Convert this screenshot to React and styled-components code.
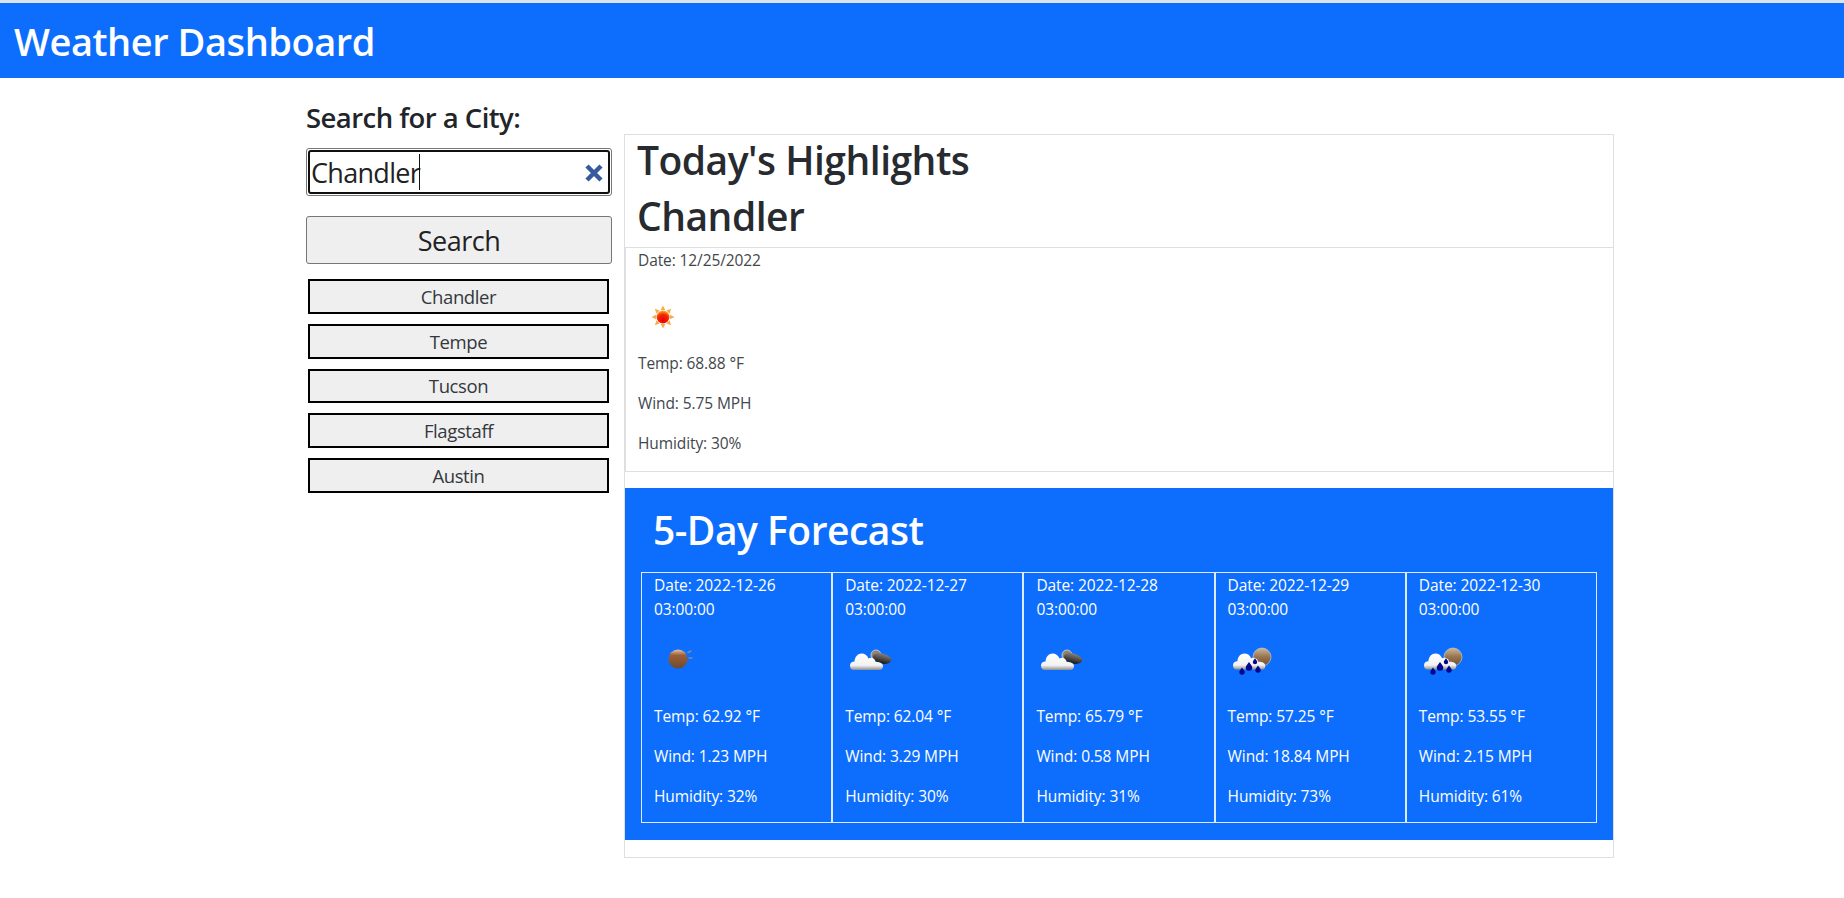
import React from "react";
import styled, { createGlobalStyle } from "styled-components";

const Global = createGlobalStyle`
  html, body { margin: 0; padding: 0; background: #fff; }
  body { font-family: "Open Sans", "Noto Sans", sans-serif; color: #212529; font-size: 16px; line-height: 24px; }
  * { box-sizing: border-box; }
`;

const Page = styled.div`
  width: 1844px;
  height: 898px;
  overflow: hidden;
`;
const Header = styled.header`
  height: 78px;
  background: #0d6efd;
  border-top: 3px solid #dde3ea;
  padding: 1px 14px 0;
  display: flex;
  align-items: center;
`;
const Title = styled.h1`
  margin: 0;
  font-size: 38px;
  line-height: 46px;
  font-weight: 600;
  letter-spacing: -0.45px;
  color: #fff;
`;
const Main = styled.main`
  display: flex;
  gap: 12px;
  padding: 24px 230px 0 306px;
`;
const Sidebar = styled.aside`
  width: 306px;
  flex: none;
`;
const SearchLabel = styled.h4`
  margin: 0 0 14px;
  height: 32px;
  font-size: 27.5px;
  line-height: 32px;
  font-weight: 600;
  letter-spacing: -0.55px;
  white-space: nowrap;
`;
const Field = styled.div`
  height: 48px;
  border: 1px solid #767676;
  border-radius: 3px;
  padding: 1px;
  background: #fff;
  margin-bottom: 20px;
`;
const FieldInner = styled.div`
  height: 100%;
  border: 2px solid #101010;
  border-radius: 3px;
  display: flex;
  align-items: center;
  padding: 2px 2px 0 1px;
  font-size: 27px;
  font-weight: 400;
  color: #222;
  letter-spacing: -0.7px;
`;
const Caret = styled.span`
  display: inline-block;
  width: 1px;
  height: 36px;
  background: #111;
  margin: -2px 0 0 -1px;
`;
const ClearIcon = styled.svg`
  width: 24px;
  height: 24px;
  margin: -1px 0 0 auto;
  flex: none;
`;
const SearchButton = styled.button`
  display: block;
  width: 306px;
  height: 48px;
  background: #efefef;
  border: 1px solid #767676;
  border-radius: 3px;
  font: inherit;
  font-size: 27px;
  font-weight: 400;
  letter-spacing: -0.5px;
  color: #222;
  padding: 2px 0 0;
  margin-bottom: 15px;
`;
const History = styled.div`
  display: flex;
  flex-direction: column;
  gap: 10px;
  padding: 0 3px 0 2px;
`;
const HistoryButton = styled.button`
  height: 34.75px;
  background: #efefef;
  border: 2.5px solid #000;
  font: inherit;
  font-size: 18.5px;
  font-weight: 400;
  letter-spacing: -0.4px;
  color: #33383d;
  padding: 1px 0 0;
`;
const Content = styled.section`
  width: 990px;
  height: 724px;
  margin-top: 32px;
  border: 1px solid #dfdfdf;
`;
const CardHeader = styled.div`
  height: 112px;
  padding: 1px 12px 0;
`;
const Heading = styled.h2`
  margin: 0 0 8px;
  font-size: 39px;
  line-height: 48px;
  font-weight: 600;
  letter-spacing: -0.5px;
  color: ${(p) => p.$light ? "#fff" : "#272b30"};
  white-space: nowrap;
`;
const Today = styled.div`
  height: 225px;
  border: 1px solid #dfdfdf;
  border-right: 0;
  padding: 0 12px;
`;
const Line = styled.p`
  margin: 0 0 16px;
  font-size: 15.5px;
  line-height: 24px;
  font-weight: 400;
  letter-spacing: -0.1px;
  color: ${(p) => p.$light ? "#fff" : "#42474c"};
`;
const IconBox = styled.div`
  width: 50px;
  height: 50px;
  margin: 0 0 ${(p) => p.$gap}px;
`;
const Forecast = styled.div`
  margin-top: 16px;
  height: 352px;
  background: #0d6efd;
  padding: 18px 16px 0 16px;
`;
const ForecastHeading = styled(Heading)`
  margin: 0 0 18px;
  padding-left: 12px;
  height: 48px;
`;
const CardRow = styled.div`
  display: flex;
`;
const DayCard = styled.div`
  flex: 1;
  height: 251px;
  border: 1px solid #dcebff;
  padding: 0 12px;
`;

const ic = {
  sun: (
    <svg viewBox="0 0 50 50" width="50" height="50">
      <defs>
        <radialGradient id="sunCore" cx="50%" cy="75%" r="70%">
          <stop offset="0%" stopColor="#e80000" />
          <stop offset="65%" stopColor="#f52a05" />
          <stop offset="100%" stopColor="#ffa010" />
        </radialGradient>
      </defs>
      <g fill="#f7ac4a">
        {[0, 45, 90, 135, 180, 225, 270, 315].map((a) => (
          <polygon key={a} points="25,17.500 22.700,22 27.300,22" transform={`rotate(${a} 25 29)`} />
        ))}
      </g>
      <circle cx="25" cy="29" r="6.500" fill="url(#sunCore)" />
    </svg>
  ),
  moon: (
    <svg viewBox="0 0 50 50" width="50" height="50">
      <defs>
        <linearGradient id="moonFill" x1="0" y1="0" x2="0" y2="1">
          <stop offset="0%" stopColor="#e3c6a6" />
          <stop offset="30%" stopColor="#9c5f38" />
          <stop offset="100%" stopColor="#6b4a30" />
        </linearGradient>
      </defs>
      <circle cx="24" cy="22" r="9.500" fill="url(#moonFill)" />
      <path d="M34 15.500l3-1.500M35 21l3 0" stroke="#7a8aa0" strokeWidth="1.500" strokeLinecap="round" />
    </svg>
  ),
};

const Cloud = ({ x = 0, y = 0, s = 1, id }) => (
  <g transform={`translate(${x} ${y}) scale(${s})`}>
    <defs>
      <linearGradient id={id} x1="0" y1="0" x2="0" y2="1">
        <stop offset="0%" stopColor="#ffffff" />
        <stop offset="72%" stopColor="#f2f2f2" />
        <stop offset="100%" stopColor="#8e8e8e" />
      </linearGradient>
    </defs>
    <path
      d="M4 19C1 19 0 17 0 14.500C0 12 2 10.500 4.500 10.500C4.800 5.500 8 2.500 11.500 2.500C15 2.500 17.500 4.500 18.500 7.500C20 6.500 23 6.500 24.500 8.500C25.500 10 25.500 10.500 25.500 11C28 10.500 33 11.500 33 15C33 17.500 31.500 19 29 19Z"
      fill={`url(#${id})`}
    />
  </g>
);

const NightClouds = ({ uid }) => (
  <svg viewBox="0 0 50 50" width="50" height="50">
    <defs>
      <linearGradient id={`dark${uid}`} x1="0" y1="0" x2="0" y2="1">
        <stop offset="0%" stopColor="#8a8176" />
        <stop offset="60%" stopColor="#444" />
        <stop offset="100%" stopColor="#151515" />
      </linearGradient>
    </defs>
    <circle cx="31" cy="18" r="5" fill="#8f8474" stroke="#d7d7d7" strokeWidth="0.800" />
    <ellipse cx="37" cy="21.500" rx="9.500" ry="5" transform="rotate(14 37 21.500)" fill={`url(#dark${uid})`} />
    <Cloud x={5} y={14} s={1} id={`cl${uid}`} />
  </svg>
);

const Drop = ({ x, y, r }) => (
  <path
    d={`M${x} ${y - r * 1.7}C${x + r * 0.4} ${y - r} ${x + r} ${y - r * 0.5} ${x + r} ${y}A${r} ${r} 0 1 1 ${x - r} ${y}C${x - r} ${y - r * 0.5} ${x - r * 0.4} ${y - r} ${x} ${y - r * 1.7}Z`}
    fill="#05058f"
  />
);

const RainClouds = ({ uid }) => (
  <svg viewBox="0 0 50 50" width="50" height="50">
    <defs>
      <linearGradient id={`rm${uid}`} x1="0" y1="0" x2="0" y2="1">
        <stop offset="0%" stopColor="#cdb89a" />
        <stop offset="50%" stopColor="#96734e" />
        <stop offset="100%" stopColor="#6d5236" />
      </linearGradient>
    </defs>
    <circle cx="34" cy="20" r="9" fill={`url(#rm${uid})`} stroke="#d5d0c8" strokeWidth="0.600" />
    <Cloud x={5} y={14} s={0.98} id={`rc${uid}`} />
    <Drop x={14} y={35} r={2.700} />
    <Drop x={21} y={30.500} r={3.300} />
    <Drop x={30} y={33} r={2.700} />
    <Drop x={27} y={25} r={2.200} />
  </svg>
);

const days = [
  { date: "2022-12-26", temp: "62.92", wind: "1.23", hum: "32", icon: ic.moon },
  { date: "2022-12-27", temp: "62.04", wind: "3.29", hum: "30", icon: <NightClouds uid="a" /> },
  { date: "2022-12-28", temp: "65.79", wind: "0.58", hum: "31", icon: <NightClouds uid="b" /> },
  { date: "2022-12-29", temp: "57.25", wind: "18.84", hum: "73", icon: <RainClouds uid="c" /> },
  { date: "2022-12-30", temp: "53.55", wind: "2.15", hum: "61", icon: <RainClouds uid="d" /> },
];

const cities = ["Chandler", "Tempe", "Tucson", "Flagstaff", "Austin"];

export default function App() {
  return (
    <Page>
      <Global />
      <Header>
        <Title>Weather Dashboard</Title>
      </Header>
      <Main>
        <Sidebar>
          <SearchLabel>Search for a City:</SearchLabel>
          <Field>
            <FieldInner>
              Chandler
              <Caret />
              <ClearIcon viewBox="0 0 24 24">
                <path d="M5 5L19 19M19 5L5 19" stroke="#375a9e" strokeWidth="4.500" />
              </ClearIcon>
            </FieldInner>
          </Field>
          <SearchButton>Search</SearchButton>
          <History>
            {cities.map((c) => (
              <HistoryButton key={c}>{c}</HistoryButton>
            ))}
          </History>
        </Sidebar>
        <Content>
          <CardHeader>
            <Heading>Today's Highlights</Heading>
            <Heading>Chandler</Heading>
          </CardHeader>
          <Today>
            <Line>Date: 12/25/2022</Line>
            <IconBox $gap={13}>{ic.sun}</IconBox>
            <Line>Temp: 68.88 °F</Line>
            <Line>Wind: 5.75 MPH</Line>
            <Line>Humidity: 30%</Line>
          </Today>
          <Forecast>
            <ForecastHeading $light>5-Day Forecast</ForecastHeading>
            <CardRow>
              {days.map((d) => (
                <DayCard key={d.date}>
                  <Line $light>Date: {d.date} 03:00:00</Line>
                  <IconBox $gap={17}>{d.icon}</IconBox>
                  <Line $light>Temp: {d.temp} °F</Line>
                  <Line $light>Wind: {d.wind} MPH</Line>
                  <Line $light>Humidity: {d.hum}%</Line>
                </DayCard>
              ))}
            </CardRow>
          </Forecast>
        </Content>
      </Main>
    </Page>
  );
}
